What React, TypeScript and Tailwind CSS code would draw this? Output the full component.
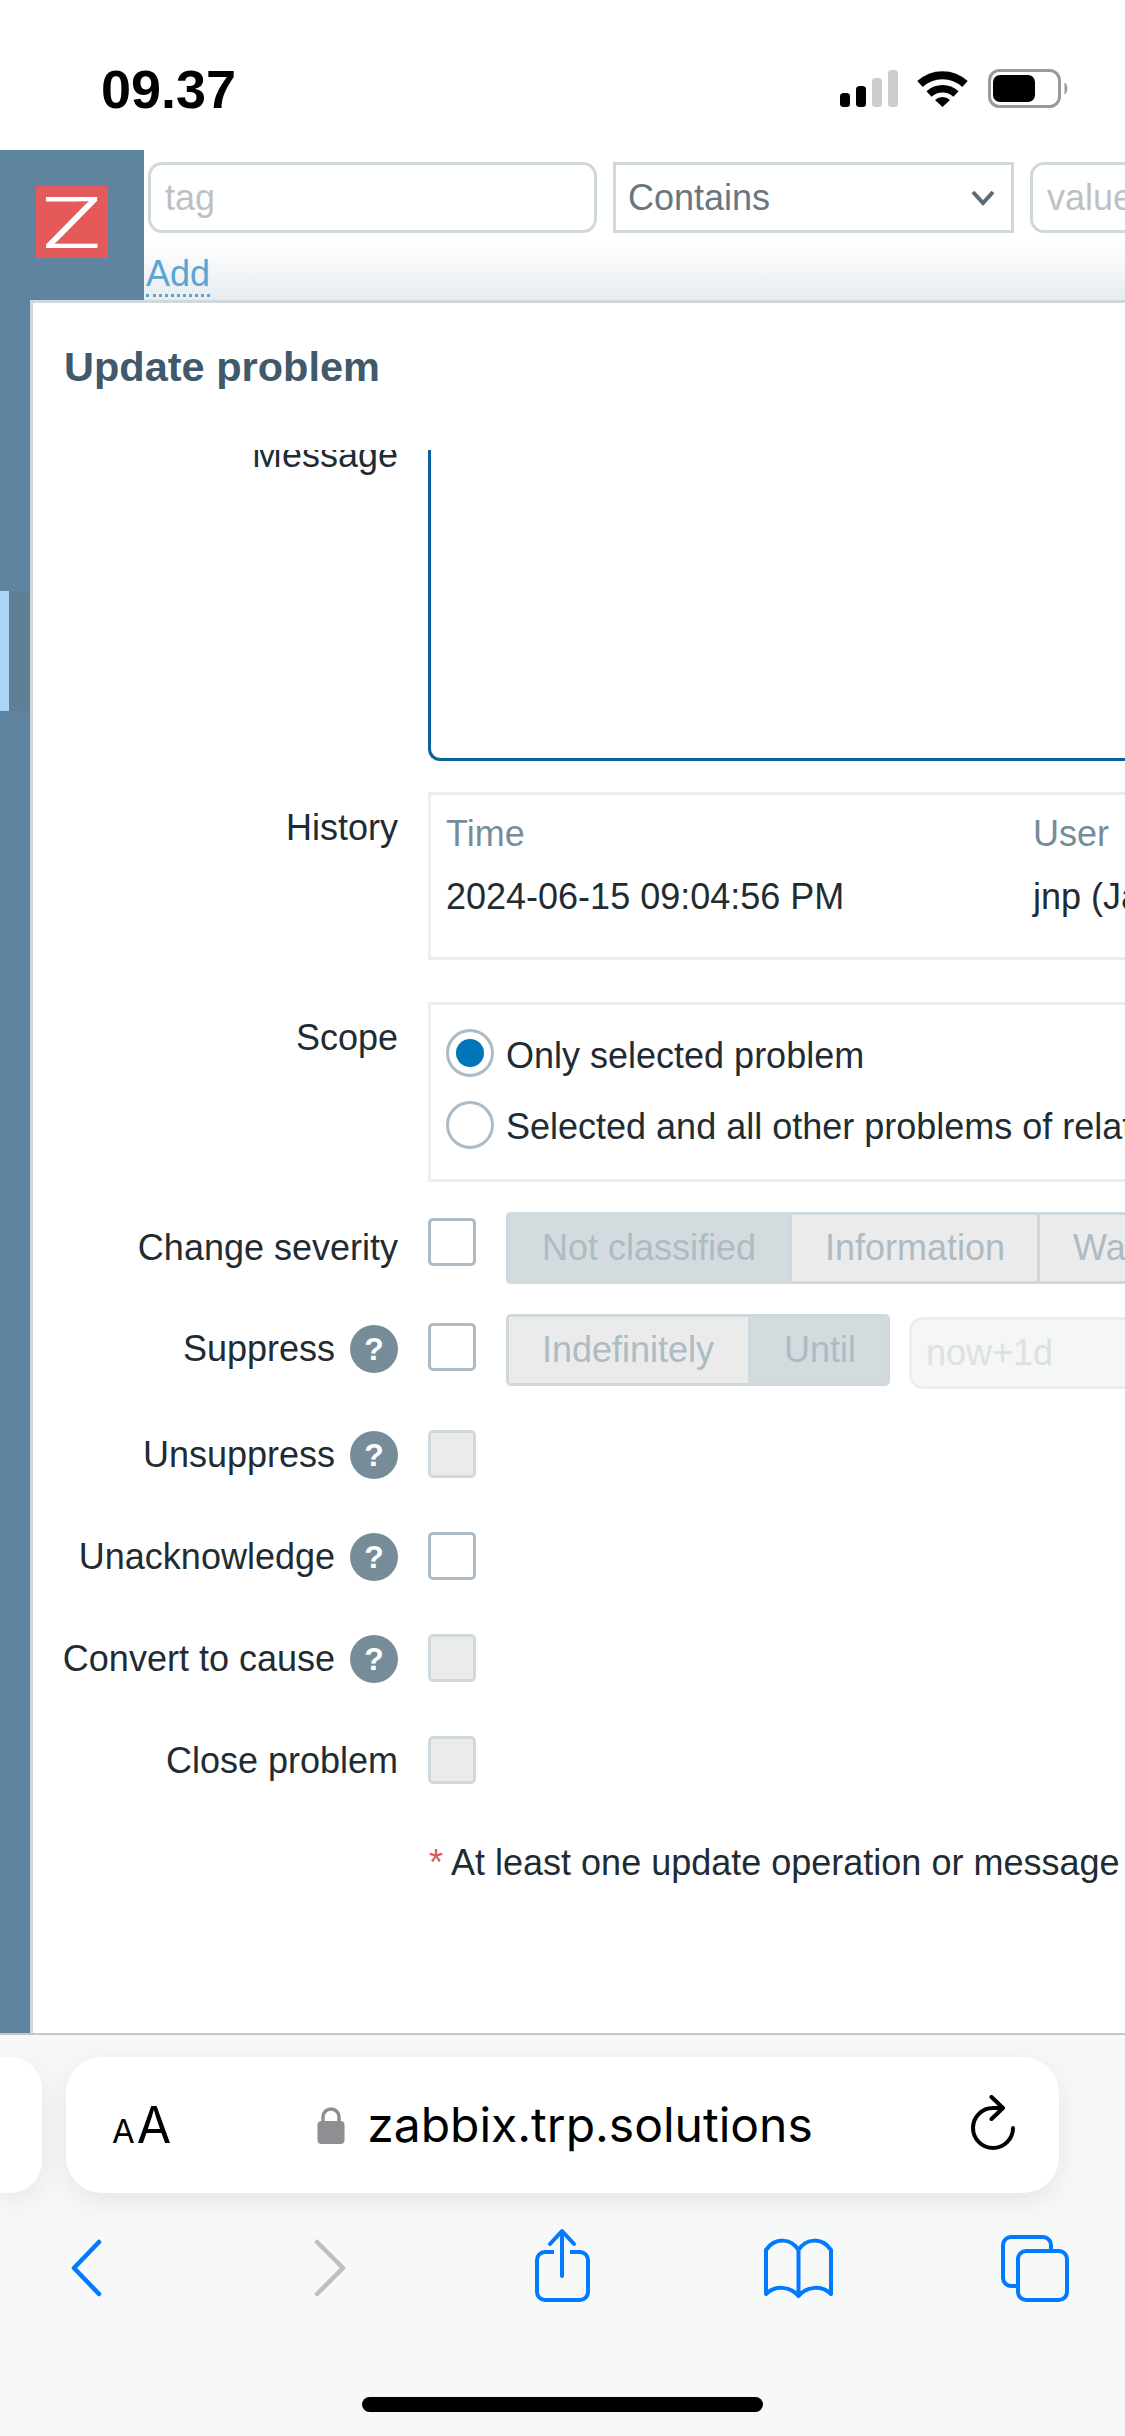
import React from "react";

const textColor = "text-[#1f2c33]";

// Round help badge next to some form labels
const Help = () => (
  <span className="flex h-[48px] w-[48px] shrink-0 items-center justify-center rounded-full bg-[#768d99] text-[32px] font-bold text-white">
    ?
  </span>
);

const Checkbox = ({ disabled }: { disabled?: boolean }) => (
  <span
    className={`block h-[48px] w-[48px] shrink-0 rounded-[5px] border-[3px] ${
      disabled ? "border-[#cfd8dd] bg-[#ebebeb]" : "border-[#acbbc5] bg-white"
    }`}
  />
);

const Radio = ({ checked }: { checked?: boolean }) => (
  <span className="flex h-[48px] w-[48px] shrink-0 items-center justify-center rounded-full border-[3px] border-[#acbbc5] bg-white">
    {checked && <span className="h-[28px] w-[28px] rounded-full bg-[#0275b8]" />}
  </span>
);

const Segment = ({ label, width, active }: { label: string; width: string; active?: boolean }) => (
  <span
    className={`flex h-full shrink-0 items-center border-r-[3px] border-[#cfd8dd] pl-[33px] text-[#acbbc4] ${width} ${
      active ? "bg-[#d3dbdf]" : "bg-[#ebebeb]"
    }`}
  >
    {label}
  </span>
);

const Row = ({
  label,
  help,
  rowClass,
  labelClass = "",
  children,
}: {
  label: string;
  help?: boolean;
  rowClass: string;
  labelClass?: string;
  children: React.ReactNode;
}) => (
  <div className={`flex items-start ${rowClass}`}>
    <div className={`flex w-[365px] shrink-0 items-center justify-end gap-[15px] ${textColor} ${labelClass}`}>
      <span className="pt-[1px] leading-[48px] whitespace-nowrap">{label}</span>
      {help && <Help />}
    </div>
    <div className="ml-[30px] flex min-w-0 shrink-0 items-start">{children}</div>
  </div>
);

const StatusIcons = () => (
  <svg width="232" height="48" viewBox="838 65 232 48" className="block">
    <rect x="840" y="93" width="10" height="14" rx="3.5" fill="#000" />
    <rect x="856" y="86" width="10" height="21" rx="3.5" fill="#000" />
    <rect x="872" y="78" width="10" height="29" rx="3.5" fill="#ccc" />
    <rect x="888" y="70" width="10" height="37" rx="3.5" fill="#ccc" />
    <path d="M920 84 A33 33 0 0 1 965 84" fill="none" stroke="#000" strokeWidth="8" />
    <path d="M929 94 A20 20 0 0 1 956 94" fill="none" stroke="#000" strokeWidth="7.5" />
    <path d="M935 100 A11 11 0 0 1 950 100 L942.5 107 Z" fill="#000" />
    <rect x="989.5" y="70.5" width="70" height="36" rx="10" fill="none" stroke="#999" strokeWidth="3" />
    <rect x="993" y="75" width="42" height="27" rx="7" fill="#000" />
    <path d="M1065 83 Q1069 88 1065 94 Z" fill="#999" stroke="#999" strokeWidth="1" />
  </svg>
);

const Chevron = () => (
  <svg width="24" height="16" viewBox="0 0 24 16" className="block">
    <path d="M2 2 L12 13 L22 2" fill="none" stroke="#5b6a74" strokeWidth="4" />
  </svg>
);

const Lock = () => (
  <svg width="28" height="40" viewBox="0 0 28 40" className="block">
    <path d="M6 18 V12 A8 8 0 0 1 22 12 V18" fill="none" stroke="#8e8e93" strokeWidth="3.5" />
    <rect x="0.5" y="16" width="27" height="23" rx="4" fill="#8e8e93" />
  </svg>
);

const Reload = () => (
  <svg width="55" height="60" viewBox="960 2095 55 60" className="block">
    <path
      d="M1001 2108 H993 A20 20 0 1 0 1013 2128 M991.5 2097 L1003 2108 L991.5 2119"
      fill="none"
      stroke="#000"
      strokeWidth="4"
      strokeLinecap="round"
      strokeLinejoin="round"
    />
  </svg>
);

const ToolbarIcon = ({ color, children }: { color: string; children: React.ReactNode }) => (
  <svg
    width="100"
    height="80"
    viewBox="0 0 100 80"
    fill="none"
    stroke={color}
    strokeWidth="4"
    strokeLinecap="round"
    strokeLinejoin="round"
    className="block"
  >
    {children}
  </svg>
);

export default function App() {
  return (
    <div className="flex h-[2436px] w-[1125px] flex-col overflow-hidden bg-white font-['Liberation_Sans',Arial,sans-serif] text-[36px]">
      {/* Status bar */}
      <div className="flex h-[150px] shrink-0 items-start bg-white pl-[101px] pr-[55px] pt-[65px]">
        <span className="text-[54px] leading-[48px] font-bold text-black">09.37</span>
        <div className="ml-auto">
          <StatusIcons />
        </div>
      </div>

      {/* Filter strip behind the dialog */}
      <div className="flex h-[150px] shrink-0">
        <div className="flex w-[144px] shrink-0 items-start bg-[#5f84a0] pl-[36px] pt-[36px]">
          <div className="flex h-[72px] w-[72px] items-center justify-center overflow-hidden bg-[#e45959] font-['Inter',sans-serif] text-[70px] font-light text-white">
            <span className="inline-block scale-x-150">Z</span>
          </div>
        </div>
        <div className="min-w-0 flex-1 overflow-hidden bg-gradient-to-b from-white from-[60%] to-[#e8ecef] pl-[4px] pt-[12px]">
          <div className="flex h-[71px] w-[1300px] gap-[16px]">
            <div className="flex h-full w-[449px] shrink-0 items-center rounded-[14px] border-[3px] border-[#cfd8dd] bg-white pl-[14px] text-[#bdc1c4]">
              tag
            </div>
            <div className="flex h-full w-[401px] shrink-0 items-center justify-between border-[3px] border-[#cfd8dd] bg-white pl-[12px] pr-[16px] text-[#687680]">
              Contains
              <Chevron />
            </div>
            <div className="flex h-full w-[300px] shrink-0 items-center rounded-[14px] border-[3px] border-[#cfd8dd] bg-white pl-[14px] text-[#bdc1c4]">
              value
            </div>
          </div>
          <span className="-ml-[2px] mt-[20px] inline-block border-b-[3px] border-dotted border-[#5aa5d3] leading-[41px] text-[#5aa5d3]">
            Add
          </span>
        </div>
      </div>

      <div className="flex min-h-0 flex-1">
        {/* Sidebar with the active item marker */}
        <div className="w-[30px] shrink-0 bg-[#5f84a0] pt-[291px]">
          <div className="h-[120px] bg-[#5e7f95]">
            <div className="h-full w-[9px] bg-[#a9d6f5]" />
          </div>
        </div>

        {/* Dialog */}
        <div className="min-w-0 flex-1 overflow-hidden border-l-[3px] border-t-[3px] border-[#cfd8dd] bg-white">
          <div className="flex h-[147px] items-start pl-[31px] pt-[42px] text-[41.5px] leading-[44px] font-bold text-[#40596b]">
            Update problem
          </div>

          <div className="h-[1583px] overflow-hidden">
            <div className="flex items-start -mt-[19px]">
              <div className={`w-[365px] shrink-0 text-right leading-[48px] ${textColor}`}>Message</div>
              <div className="ml-[30px] mt-[19px] h-[311px] w-[800px] shrink-0 rounded-bl-[12px] border-b-[3px] border-l-[3px] border-[#0b639c]" />
            </div>

            <Row label="History" rowClass="mt-[31px] h-[168px]" labelClass="pt-[11px]">
              <div className="h-[168px] w-[800px] border-[3px] border-[#ebeef0]">
                <div className="flex pt-[15px] text-[#768d99] leading-[48px]">
                  <span className="w-[602px] shrink-0 pl-[15px]">Time</span>
                  <span>User</span>
                </div>
                <div className={`flex pt-[15px] leading-[48px] ${textColor}`}>
                  <span className="w-[602px] shrink-0 pl-[15px]">2024-06-15 09:04:56 PM</span>
                  <span>jnp (Ja</span>
                </div>
              </div>
            </Row>

            <Row label="Scope" rowClass="mt-[42px] h-[180px]" labelClass="pt-[11px]">
              <div className={`flex h-[180px] w-[800px] flex-col gap-[24px] border-[3px] border-[#ebeef0] pl-[15px] pt-[24px] ${textColor}`}>
                <div className="flex h-[48px] items-center gap-[12px] whitespace-nowrap">
                  <Radio checked />
                  <span className="pt-[5px] leading-[48px]">Only selected problem</span>
                </div>
                <div className="flex h-[48px] items-center gap-[12px] whitespace-nowrap">
                  <Radio />
                  <span className="pt-[3px] leading-[48px]">Selected and all other problems of related events</span>
                </div>
              </div>
            </Row>

            <Row label="Change severity" rowClass="mt-[30px] h-[72px]" labelClass="pt-[11px]">
              <div className="pt-[6px]">
                <Checkbox />
              </div>
              <div className="ml-[30px] flex h-[72px] w-[800px] overflow-hidden rounded-l-[5px] border-y-[3px] border-l-[3px] border-[#cfd8dd]">
                <Segment label="Not classified" width="w-[283px]" active />
                <Segment label="Information" width="w-[248px]" />
                <Segment label="Warning" width="w-[240px]" />
              </div>
            </Row>

            <Row label="Suppress" help rowClass="mt-[30px] h-[72px]" labelClass="pt-[10px]">
              <div className="pt-[9px]">
                <Checkbox />
              </div>
              <div className="ml-[30px] flex h-[72px] w-[384px] overflow-hidden rounded-[5px] border-[3px] border-[#cfd8dd]">
                <Segment label="Indefinitely" width="w-[242px]" />
                <span className="flex h-full flex-1 items-center bg-[#d3dbdf] pl-[33px] text-[#acbbc4]">Until</span>
              </div>
              <div className="ml-[19px] mt-[3px] flex h-[72px] w-[400px] items-center rounded-[14px] border-[3px] border-[#ebeef0] bg-[#f5f6f6] pl-[14px] text-[#dde1e4]">
                now+1d
              </div>
            </Row>

            <Row label="Unsuppress" help rowClass="mt-[44px] h-[48px]">
              <Checkbox disabled />
            </Row>
            <Row label="Unacknowledge" help rowClass="mt-[54px] h-[48px]">
              <Checkbox />
            </Row>
            <Row label="Convert to cause" help rowClass="mt-[54px] h-[48px]">
              <Checkbox disabled />
            </Row>
            <Row label="Close problem" rowClass="mt-[54px] h-[48px]">
              <Checkbox disabled />
            </Row>

            <div className={`ml-[396px] mt-[55px] w-[800px] whitespace-nowrap leading-[48px] ${textColor}`}>
              <span className="text-[#e45959]">*</span> At least one update operation or message must exist.
            </div>
          </div>
        </div>
      </div>

      {/* Safari toolbar */}
      <div className="relative h-[403px] shrink-0 border-t-2 border-[#c6c7c8] bg-[#f7f8f8]">
        <div className="flex h-[136px] mt-[22px]">
          <div className="h-full w-[42px] shrink-0 rounded-r-[32px] bg-white shadow-[0_8px_30px_rgba(0,0,0,0.08)]" />
          <div className="ml-[24px] flex h-full w-[993px] shrink-0 items-center justify-between rounded-[36px] bg-white pl-[46px] pr-[44px] shadow-[0_8px_30px_rgba(0,0,0,0.08)]">
            <span className="flex w-[58px] items-baseline gap-[2px] font-['Inter',sans-serif] leading-none text-black">
              <span className="text-[33px]">A</span>
              <span className="text-[50px]">A</span>
            </span>
            <div className="flex items-center gap-[22px]">
              <Lock />
              <span className="font-['Inter',sans-serif] text-[48px] leading-[60px] text-black">zabbix.trp.solutions</span>
            </div>
            <Reload />
          </div>
        </div>

        <div className="mt-[33px] flex justify-between pl-[36px] pr-[41px]">
          <ToolbarIcon color="#007aff">
            <path d="M63 16 L38 42 L63 68" strokeWidth="4.5" />
          </ToolbarIcon>
          <ToolbarIcon color="#bfbfbf">
            <path d="M44 16 L70 42 L44 68" strokeWidth="4.5" />
          </ToolbarIcon>
          <ToolbarIcon color="#007aff">
            <path d="M44 26 H35 A8 8 0 0 0 27 34 V66 A8 8 0 0 0 35 74 H70 A8 8 0 0 0 78 66 V34 A8 8 0 0 0 70 26 H60" strokeLinecap="butt" />
            <path d="M52 6 V50 M40 18 L52 5 L64 18" />
          </ToolbarIcon>
          <ToolbarIcon color="#007aff">
            <path d="M51.5 24 C44 12 28 11 19 24 V68 C28 59 43 60 51.5 70 C60 60 75 59 84 68 V24 C75 11 59 12 51.5 24 V70" />
          </ToolbarIcon>
          <ToolbarIcon color="#007aff">
            <path d="M33 60 H27 A8 8 0 0 1 19 52 V19 A8 8 0 0 1 27 11 H59 A8 8 0 0 1 67 19 V25" strokeLinecap="butt" />
            <rect x="34" y="25" width="49" height="49" rx="8" />
          </ToolbarIcon>
        </div>

        <div className="absolute left-[362px] top-[362px] h-[15px] w-[401px] rounded-full bg-black" />
      </div>
    </div>
  );
}
